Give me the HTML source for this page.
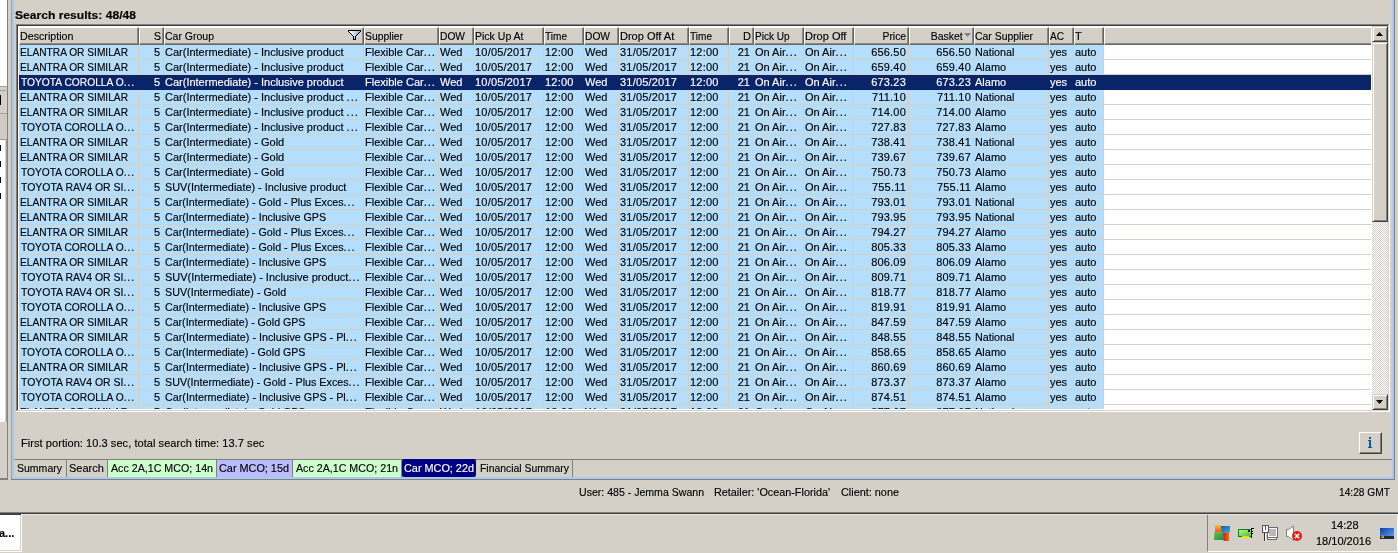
<!DOCTYPE html><html><head><meta charset="utf-8"><style>
*{margin:0;padding:0;box-sizing:border-box}
body{-webkit-text-stroke:.15px currentColor;will-change:transform;width:1398px;height:553px;overflow:hidden;background:#d4d0c8;font-family:"Liberation Sans", sans-serif;font-size:11px;color:#000;position:relative}
div{position:absolute}
i{font-style:normal;display:inline-block;white-space:pre}
svg{display:block}
.e{font-weight:normal;letter-spacing:1px}
.row{left:19px;width:1352px;height:15px}
.c{top:0;height:14px;line-height:14px;white-space:pre;overflow:hidden;padding-left:1px}
.n{letter-spacing:.2px}
.r{text-align:right;padding-left:0;padding-right:3px}
.r.n{padding-right:2px}
.hc{top:27px;height:18px;line-height:17px;white-space:pre;overflow:hidden;background:#d4d0c8;border-top:1px solid #fff;border-left:1px solid #fff;border-right:1px solid #66625c;border-bottom:1px solid #6c6862;box-shadow:inset -1px 0 0 #8c8882, inset 0 -1px 0 #8c8882;padding-left:0}
.hr{text-align:right;padding-left:0;padding-right:2px}
</style></head><body>
<div style='left:0;top:0;width:7px;height:86px;background:#fff'></div><div style='left:0;top:86px;width:7px;height:1px;background:#a0a0a0'></div><div style='left:0;top:90px;width:6px;height:1px;background:#a0a0a0'></div><div style='left:0;top:95px;width:1px;height:10px;background:#000'></div><div style='left:0;top:113px;width:7px;height:1px;background:#a0a0a0'></div><div style='left:0;top:114px;width:7px;height:25px;background:#cfcbc3'></div><div style='left:0;top:139px;width:7px;height:1px;background:#a0a0a0'></div><div style='left:0;top:140px;width:5px;height:282px;background:#fff'></div><div style='left:6px;top:140px;width:1px;height:282px;background:#a0a0a0'></div><div style='left:0;top:145px;width:1px;height:6px;background:#000'></div><div style='left:0;top:161px;width:1px;height:6px;background:#000'></div><div style='left:0;top:177px;width:1px;height:6px;background:#000'></div><div style='left:0;top:193px;width:1px;height:6px;background:#000'></div><div style='left:7px;top:0;width:1px;height:479px;background:#808080'></div><div style='left:0;top:478px;width:8px;height:2px;background:#808080'></div><div style='left:11px;top:0;width:1px;height:480px;background:#a0a0a0'></div><div style='left:12px;top:0;width:2px;height:479px;background:#a6caf0'></div><div style='left:1392px;top:0;width:2px;height:479px;background:#a6caf0'></div><div style='left:1394px;top:0;width:1px;height:480px;background:#808080'></div><div style='left:12px;top:477px;width:1382px;height:2px;background:#a6caf0'></div><div style='left:11px;top:479px;width:1384px;height:1px;background:#808080'></div><div style='left:15px;top:8px;height:14px;line-height:14px;font-weight:bold;white-space:pre'><i style='transform:scaleX(1.099);transform-origin:left'>Search results: 48/48</i></div><div style='left:16px;top:24px;width:1374px;height:388px;background:#fff;border-top:1px solid #808080;border-left:1px solid #808080'></div><div style='left:17px;top:25px;width:1372px;height:1px;background:#404040'></div><div style='left:17px;top:25px;width:1px;height:386px;background:#404040'></div><div class='hc' style='left:19px;width:120px'><i style='transform:scaleX(0.972);transform-origin:left'>Description</i></div><div class='hc hr' style='left:139px;width:25px'>S</div><div class='hc' style='left:164px;width:200px'><i style='transform:scaleX(0.954);transform-origin:left'>Car Group</i></div><div class='hc' style='left:364px;width:75px'><i style='transform:scaleX(0.942);transform-origin:left'>Supplier</i></div><div class='hc' style='left:439px;width:35px'><i style='transform:scaleX(0.930);transform-origin:left'>DOW</i></div><div class='hc' style='left:474px;width:70px'><i style='transform:scaleX(0.956);transform-origin:left'>Pick Up At</i></div><div class='hc' style='left:544px;width:40px'><i style='transform:scaleX(0.915);transform-origin:left'>Time</i></div><div class='hc' style='left:584px;width:35px'><i style='transform:scaleX(0.930);transform-origin:left'>DOW</i></div><div class='hc' style='left:619px;width:70px'>Drop Off At</div><div class='hc' style='left:689px;width:40px'><i style='transform:scaleX(0.915);transform-origin:left'>Time</i></div><div class='hc hr' style='left:729px;width:25px'>D</div><div class='hc' style='left:754px;width:50px'><i style='transform:scaleX(0.913);transform-origin:left'>Pick Up</i></div><div class='hc' style='left:804px;width:50px'>Drop Off</div><div class='hc hr' style='left:854px;width:55px'><i style='transform:scaleX(0.938);transform-origin:right'>Price</i></div><div class='hc hr' style='left:909px;width:65px;padding-right:10px'><i style='transform:scaleX(0.951);transform-origin:right'>Basket</i></div><div class='hc' style='left:974px;width:75px'><i style='transform:scaleX(0.949);transform-origin:left'>Car Supplier</i></div><div class='hc' style='left:1049px;width:25px'><i style='transform:scaleX(0.916);transform-origin:left'>AC</i></div><div class='hc' style='left:1074px;width:30px'>T</div><div class='hc' style='left:1104px;width:267px;border-right:0;box-shadow:inset 0 -1px 0 #8c8882'></div><div style='left:348px;top:30px;width:13px;height:10px'><svg width='13' height='10' viewBox='0 0 13 10' shape-rendering='crispEdges'><defs><linearGradient id='fg' x1='0' x2='1'><stop offset='0' stop-color='#ffffff'/><stop offset='1' stop-color='#90b4e0'/></linearGradient></defs><rect x='0' y='0' width='13' height='1' fill='#000'/><rect x='0' y='1' width='1' height='1' fill='#000'/><rect x='12' y='1' width='1' height='1' fill='#000'/><rect x='1' y='1' width='11' height='1' fill='url(#fg)'/><rect x='1' y='2' width='1' height='1' fill='#000'/><rect x='11' y='2' width='1' height='1' fill='#000'/><rect x='2' y='2' width='9' height='1' fill='url(#fg)'/><rect x='2' y='3' width='1' height='1' fill='#000'/><rect x='10' y='3' width='1' height='1' fill='#000'/><rect x='3' y='3' width='7' height='1' fill='url(#fg)'/><rect x='3' y='4' width='1' height='1' fill='#000'/><rect x='9' y='4' width='1' height='1' fill='#000'/><rect x='4' y='4' width='5' height='1' fill='url(#fg)'/><rect x='4' y='5' width='1' height='1' fill='#000'/><rect x='8' y='5' width='1' height='1' fill='#000'/><rect x='5' y='5' width='3' height='1' fill='url(#fg)'/><rect x='5' y='6' width='1' height='1' fill='#000'/><rect x='7' y='6' width='1' height='1' fill='#000'/><rect x='6' y='6' width='1' height='1' fill='#c8d8f0'/><rect x='5' y='7' width='1' height='1' fill='#000'/><rect x='7' y='7' width='1' height='1' fill='#000'/><rect x='6' y='7' width='1' height='1' fill='#c8d8f0'/><rect x='5' y='8' width='1' height='1' fill='#000'/><rect x='7' y='8' width='1' height='1' fill='#000'/><rect x='6' y='8' width='1' height='1' fill='#c8d8f0'/><rect x='5' y='9' width='3' height='1' fill='#000'/></svg></div><div style='left:964px;top:33px;width:7px;height:4px'><svg width='7' height='4' viewBox='0 0 7 4'><path d='M0 0H7L3.5 4Z' fill='#808080'/></svg></div><div style='left:19px;top:45px;width:1085px;height:14px;background:#b5defd;color:#000;overflow:hidden'><div class='c' style='left:0px;width:119px'><i style='transform:scaleX(0.925);transform-origin:left'>ELANTRA OR SIMILAR</i></div><div style='left:119px;top:0;width:1px;height:14px;background:#d4d0c8'></div><div class='c r' style='left:120px;width:24px'>5</div><div style='left:144px;top:0;width:1px;height:14px;background:#d4d0c8'></div><div class='c' style='left:145px;width:199px'>Car(Intermediate) - Inclusive product</div><div style='left:344px;top:0;width:1px;height:14px;background:#d4d0c8'></div><div class='c' style='left:345px;width:74px'>Flexible Car<b class=e>...</b></div><div style='left:419px;top:0;width:1px;height:14px;background:#d4d0c8'></div><div class='c' style='left:420px;width:34px'>Wed</div><div style='left:454px;top:0;width:1px;height:14px;background:#d4d0c8'></div><div class='c n' style='left:455px;width:69px'>10/05/2017</div><div style='left:524px;top:0;width:1px;height:14px;background:#d4d0c8'></div><div class='c n' style='left:525px;width:39px'>12:00</div><div style='left:564px;top:0;width:1px;height:14px;background:#d4d0c8'></div><div class='c' style='left:565px;width:34px'>Wed</div><div style='left:599px;top:0;width:1px;height:14px;background:#d4d0c8'></div><div class='c n' style='left:600px;width:69px'>31/05/2017</div><div style='left:669px;top:0;width:1px;height:14px;background:#d4d0c8'></div><div class='c n' style='left:670px;width:39px'>12:00</div><div style='left:709px;top:0;width:1px;height:14px;background:#d4d0c8'></div><div class='c r' style='left:710px;width:24px'>21</div><div style='left:734px;top:0;width:1px;height:14px;background:#d4d0c8'></div><div class='c' style='left:735px;width:49px'>On Air<b class=e>...</b></div><div style='left:784px;top:0;width:1px;height:14px;background:#d4d0c8'></div><div class='c' style='left:785px;width:49px'>On Air<b class=e>...</b></div><div style='left:834px;top:0;width:1px;height:14px;background:#d4d0c8'></div><div class='c r n' style='left:835px;width:54px'>656.50</div><div style='left:889px;top:0;width:1px;height:14px;background:#d4d0c8'></div><div class='c r n' style='left:890px;width:64px'>656.50</div><div style='left:954px;top:0;width:1px;height:14px;background:#d4d0c8'></div><div class='c' style='left:955px;width:74px'><i style='transform:scaleX(0.976);transform-origin:left'>National</i></div><div style='left:1029px;top:0;width:1px;height:14px;background:#d4d0c8'></div><div class='c' style='left:1030px;width:24px'>yes</div><div style='left:1054px;top:0;width:1px;height:14px;background:#d4d0c8'></div><div class='c' style='left:1055px;width:29px'>auto</div><div style='left:1084px;top:0;width:1px;height:14px;background:#d4d0c8'></div></div><div style='left:19px;top:59px;width:1352px;height:1px;background:#d4d0c8'></div><div style='left:19px;top:60px;width:1085px;height:14px;background:#b5defd;color:#000;overflow:hidden'><div class='c' style='left:0px;width:119px'><i style='transform:scaleX(0.925);transform-origin:left'>ELANTRA OR SIMILAR</i></div><div style='left:119px;top:0;width:1px;height:14px;background:#d4d0c8'></div><div class='c r' style='left:120px;width:24px'>5</div><div style='left:144px;top:0;width:1px;height:14px;background:#d4d0c8'></div><div class='c' style='left:145px;width:199px'>Car(Intermediate) - Inclusive product</div><div style='left:344px;top:0;width:1px;height:14px;background:#d4d0c8'></div><div class='c' style='left:345px;width:74px'>Flexible Car<b class=e>...</b></div><div style='left:419px;top:0;width:1px;height:14px;background:#d4d0c8'></div><div class='c' style='left:420px;width:34px'>Wed</div><div style='left:454px;top:0;width:1px;height:14px;background:#d4d0c8'></div><div class='c n' style='left:455px;width:69px'>10/05/2017</div><div style='left:524px;top:0;width:1px;height:14px;background:#d4d0c8'></div><div class='c n' style='left:525px;width:39px'>12:00</div><div style='left:564px;top:0;width:1px;height:14px;background:#d4d0c8'></div><div class='c' style='left:565px;width:34px'>Wed</div><div style='left:599px;top:0;width:1px;height:14px;background:#d4d0c8'></div><div class='c n' style='left:600px;width:69px'>31/05/2017</div><div style='left:669px;top:0;width:1px;height:14px;background:#d4d0c8'></div><div class='c n' style='left:670px;width:39px'>12:00</div><div style='left:709px;top:0;width:1px;height:14px;background:#d4d0c8'></div><div class='c r' style='left:710px;width:24px'>21</div><div style='left:734px;top:0;width:1px;height:14px;background:#d4d0c8'></div><div class='c' style='left:735px;width:49px'>On Air<b class=e>...</b></div><div style='left:784px;top:0;width:1px;height:14px;background:#d4d0c8'></div><div class='c' style='left:785px;width:49px'>On Air<b class=e>...</b></div><div style='left:834px;top:0;width:1px;height:14px;background:#d4d0c8'></div><div class='c r n' style='left:835px;width:54px'>659.40</div><div style='left:889px;top:0;width:1px;height:14px;background:#d4d0c8'></div><div class='c r n' style='left:890px;width:64px'>659.40</div><div style='left:954px;top:0;width:1px;height:14px;background:#d4d0c8'></div><div class='c' style='left:955px;width:74px'>Alamo</div><div style='left:1029px;top:0;width:1px;height:14px;background:#d4d0c8'></div><div class='c' style='left:1030px;width:24px'>yes</div><div style='left:1054px;top:0;width:1px;height:14px;background:#d4d0c8'></div><div class='c' style='left:1055px;width:29px'>auto</div><div style='left:1084px;top:0;width:1px;height:14px;background:#d4d0c8'></div></div><div style='left:19px;top:74px;width:1352px;height:1px;background:#d4d0c8'></div><div style='left:19px;top:75px;width:1352px;height:15px;background:#0a246a;color:#fff;overflow:hidden'><div class='c' style='left:0px;width:119px'><i style='transform:scaleX(0.931);transform-origin:left;margin-left:1px'>TOYOTA COROLLA O<b class=e>...</b></i></div><div class='c r' style='left:120px;width:24px'>5</div><div class='c' style='left:145px;width:199px'>Car(Intermediate) - Inclusive product</div><div class='c' style='left:345px;width:74px'>Flexible Car<b class=e>...</b></div><div class='c' style='left:420px;width:34px'>Wed</div><div class='c n' style='left:455px;width:69px'>10/05/2017</div><div class='c n' style='left:525px;width:39px'>12:00</div><div class='c' style='left:565px;width:34px'>Wed</div><div class='c n' style='left:600px;width:69px'>31/05/2017</div><div class='c n' style='left:670px;width:39px'>12:00</div><div class='c r' style='left:710px;width:24px'>21</div><div class='c' style='left:735px;width:49px'>On Air<b class=e>...</b></div><div class='c' style='left:785px;width:49px'>On Air<b class=e>...</b></div><div class='c r n' style='left:835px;width:54px'>673.23</div><div class='c r n' style='left:890px;width:64px'>673.23</div><div class='c' style='left:955px;width:74px'>Alamo</div><div class='c' style='left:1030px;width:24px'>yes</div><div class='c' style='left:1055px;width:29px'>auto</div></div><div style='left:19px;top:89px;width:1352px;height:1px;background:#0a246a'></div><div style='left:19px;top:90px;width:1085px;height:14px;background:#b5defd;color:#000;overflow:hidden'><div class='c' style='left:0px;width:119px'><i style='transform:scaleX(0.925);transform-origin:left'>ELANTRA OR SIMILAR</i></div><div style='left:119px;top:0;width:1px;height:14px;background:#d4d0c8'></div><div class='c r' style='left:120px;width:24px'>5</div><div style='left:144px;top:0;width:1px;height:14px;background:#d4d0c8'></div><div class='c' style='left:145px;width:199px'>Car(Intermediate) - Inclusive product <b class=e>...</b></div><div style='left:344px;top:0;width:1px;height:14px;background:#d4d0c8'></div><div class='c' style='left:345px;width:74px'>Flexible Car<b class=e>...</b></div><div style='left:419px;top:0;width:1px;height:14px;background:#d4d0c8'></div><div class='c' style='left:420px;width:34px'>Wed</div><div style='left:454px;top:0;width:1px;height:14px;background:#d4d0c8'></div><div class='c n' style='left:455px;width:69px'>10/05/2017</div><div style='left:524px;top:0;width:1px;height:14px;background:#d4d0c8'></div><div class='c n' style='left:525px;width:39px'>12:00</div><div style='left:564px;top:0;width:1px;height:14px;background:#d4d0c8'></div><div class='c' style='left:565px;width:34px'>Wed</div><div style='left:599px;top:0;width:1px;height:14px;background:#d4d0c8'></div><div class='c n' style='left:600px;width:69px'>31/05/2017</div><div style='left:669px;top:0;width:1px;height:14px;background:#d4d0c8'></div><div class='c n' style='left:670px;width:39px'>12:00</div><div style='left:709px;top:0;width:1px;height:14px;background:#d4d0c8'></div><div class='c r' style='left:710px;width:24px'>21</div><div style='left:734px;top:0;width:1px;height:14px;background:#d4d0c8'></div><div class='c' style='left:735px;width:49px'>On Air<b class=e>...</b></div><div style='left:784px;top:0;width:1px;height:14px;background:#d4d0c8'></div><div class='c' style='left:785px;width:49px'>On Air<b class=e>...</b></div><div style='left:834px;top:0;width:1px;height:14px;background:#d4d0c8'></div><div class='c r n' style='left:835px;width:54px'>711.10</div><div style='left:889px;top:0;width:1px;height:14px;background:#d4d0c8'></div><div class='c r n' style='left:890px;width:64px'>711.10</div><div style='left:954px;top:0;width:1px;height:14px;background:#d4d0c8'></div><div class='c' style='left:955px;width:74px'><i style='transform:scaleX(0.976);transform-origin:left'>National</i></div><div style='left:1029px;top:0;width:1px;height:14px;background:#d4d0c8'></div><div class='c' style='left:1030px;width:24px'>yes</div><div style='left:1054px;top:0;width:1px;height:14px;background:#d4d0c8'></div><div class='c' style='left:1055px;width:29px'>auto</div><div style='left:1084px;top:0;width:1px;height:14px;background:#d4d0c8'></div></div><div style='left:19px;top:104px;width:1352px;height:1px;background:#d4d0c8'></div><div style='left:19px;top:105px;width:1085px;height:14px;background:#b5defd;color:#000;overflow:hidden'><div class='c' style='left:0px;width:119px'><i style='transform:scaleX(0.925);transform-origin:left'>ELANTRA OR SIMILAR</i></div><div style='left:119px;top:0;width:1px;height:14px;background:#d4d0c8'></div><div class='c r' style='left:120px;width:24px'>5</div><div style='left:144px;top:0;width:1px;height:14px;background:#d4d0c8'></div><div class='c' style='left:145px;width:199px'>Car(Intermediate) - Inclusive product <b class=e>...</b></div><div style='left:344px;top:0;width:1px;height:14px;background:#d4d0c8'></div><div class='c' style='left:345px;width:74px'>Flexible Car<b class=e>...</b></div><div style='left:419px;top:0;width:1px;height:14px;background:#d4d0c8'></div><div class='c' style='left:420px;width:34px'>Wed</div><div style='left:454px;top:0;width:1px;height:14px;background:#d4d0c8'></div><div class='c n' style='left:455px;width:69px'>10/05/2017</div><div style='left:524px;top:0;width:1px;height:14px;background:#d4d0c8'></div><div class='c n' style='left:525px;width:39px'>12:00</div><div style='left:564px;top:0;width:1px;height:14px;background:#d4d0c8'></div><div class='c' style='left:565px;width:34px'>Wed</div><div style='left:599px;top:0;width:1px;height:14px;background:#d4d0c8'></div><div class='c n' style='left:600px;width:69px'>31/05/2017</div><div style='left:669px;top:0;width:1px;height:14px;background:#d4d0c8'></div><div class='c n' style='left:670px;width:39px'>12:00</div><div style='left:709px;top:0;width:1px;height:14px;background:#d4d0c8'></div><div class='c r' style='left:710px;width:24px'>21</div><div style='left:734px;top:0;width:1px;height:14px;background:#d4d0c8'></div><div class='c' style='left:735px;width:49px'>On Air<b class=e>...</b></div><div style='left:784px;top:0;width:1px;height:14px;background:#d4d0c8'></div><div class='c' style='left:785px;width:49px'>On Air<b class=e>...</b></div><div style='left:834px;top:0;width:1px;height:14px;background:#d4d0c8'></div><div class='c r n' style='left:835px;width:54px'>714.00</div><div style='left:889px;top:0;width:1px;height:14px;background:#d4d0c8'></div><div class='c r n' style='left:890px;width:64px'>714.00</div><div style='left:954px;top:0;width:1px;height:14px;background:#d4d0c8'></div><div class='c' style='left:955px;width:74px'>Alamo</div><div style='left:1029px;top:0;width:1px;height:14px;background:#d4d0c8'></div><div class='c' style='left:1030px;width:24px'>yes</div><div style='left:1054px;top:0;width:1px;height:14px;background:#d4d0c8'></div><div class='c' style='left:1055px;width:29px'>auto</div><div style='left:1084px;top:0;width:1px;height:14px;background:#d4d0c8'></div></div><div style='left:19px;top:119px;width:1352px;height:1px;background:#d4d0c8'></div><div style='left:19px;top:120px;width:1085px;height:14px;background:#b5defd;color:#000;overflow:hidden'><div class='c' style='left:0px;width:119px'><i style='transform:scaleX(0.931);transform-origin:left;margin-left:1px'>TOYOTA COROLLA O<b class=e>...</b></i></div><div style='left:119px;top:0;width:1px;height:14px;background:#d4d0c8'></div><div class='c r' style='left:120px;width:24px'>5</div><div style='left:144px;top:0;width:1px;height:14px;background:#d4d0c8'></div><div class='c' style='left:145px;width:199px'>Car(Intermediate) - Inclusive product <b class=e>...</b></div><div style='left:344px;top:0;width:1px;height:14px;background:#d4d0c8'></div><div class='c' style='left:345px;width:74px'>Flexible Car<b class=e>...</b></div><div style='left:419px;top:0;width:1px;height:14px;background:#d4d0c8'></div><div class='c' style='left:420px;width:34px'>Wed</div><div style='left:454px;top:0;width:1px;height:14px;background:#d4d0c8'></div><div class='c n' style='left:455px;width:69px'>10/05/2017</div><div style='left:524px;top:0;width:1px;height:14px;background:#d4d0c8'></div><div class='c n' style='left:525px;width:39px'>12:00</div><div style='left:564px;top:0;width:1px;height:14px;background:#d4d0c8'></div><div class='c' style='left:565px;width:34px'>Wed</div><div style='left:599px;top:0;width:1px;height:14px;background:#d4d0c8'></div><div class='c n' style='left:600px;width:69px'>31/05/2017</div><div style='left:669px;top:0;width:1px;height:14px;background:#d4d0c8'></div><div class='c n' style='left:670px;width:39px'>12:00</div><div style='left:709px;top:0;width:1px;height:14px;background:#d4d0c8'></div><div class='c r' style='left:710px;width:24px'>21</div><div style='left:734px;top:0;width:1px;height:14px;background:#d4d0c8'></div><div class='c' style='left:735px;width:49px'>On Air<b class=e>...</b></div><div style='left:784px;top:0;width:1px;height:14px;background:#d4d0c8'></div><div class='c' style='left:785px;width:49px'>On Air<b class=e>...</b></div><div style='left:834px;top:0;width:1px;height:14px;background:#d4d0c8'></div><div class='c r n' style='left:835px;width:54px'>727.83</div><div style='left:889px;top:0;width:1px;height:14px;background:#d4d0c8'></div><div class='c r n' style='left:890px;width:64px'>727.83</div><div style='left:954px;top:0;width:1px;height:14px;background:#d4d0c8'></div><div class='c' style='left:955px;width:74px'>Alamo</div><div style='left:1029px;top:0;width:1px;height:14px;background:#d4d0c8'></div><div class='c' style='left:1030px;width:24px'>yes</div><div style='left:1054px;top:0;width:1px;height:14px;background:#d4d0c8'></div><div class='c' style='left:1055px;width:29px'>auto</div><div style='left:1084px;top:0;width:1px;height:14px;background:#d4d0c8'></div></div><div style='left:19px;top:134px;width:1352px;height:1px;background:#d4d0c8'></div><div style='left:19px;top:135px;width:1085px;height:14px;background:#b5defd;color:#000;overflow:hidden'><div class='c' style='left:0px;width:119px'><i style='transform:scaleX(0.925);transform-origin:left'>ELANTRA OR SIMILAR</i></div><div style='left:119px;top:0;width:1px;height:14px;background:#d4d0c8'></div><div class='c r' style='left:120px;width:24px'>5</div><div style='left:144px;top:0;width:1px;height:14px;background:#d4d0c8'></div><div class='c' style='left:145px;width:199px'>Car(Intermediate) - Gold</div><div style='left:344px;top:0;width:1px;height:14px;background:#d4d0c8'></div><div class='c' style='left:345px;width:74px'>Flexible Car<b class=e>...</b></div><div style='left:419px;top:0;width:1px;height:14px;background:#d4d0c8'></div><div class='c' style='left:420px;width:34px'>Wed</div><div style='left:454px;top:0;width:1px;height:14px;background:#d4d0c8'></div><div class='c n' style='left:455px;width:69px'>10/05/2017</div><div style='left:524px;top:0;width:1px;height:14px;background:#d4d0c8'></div><div class='c n' style='left:525px;width:39px'>12:00</div><div style='left:564px;top:0;width:1px;height:14px;background:#d4d0c8'></div><div class='c' style='left:565px;width:34px'>Wed</div><div style='left:599px;top:0;width:1px;height:14px;background:#d4d0c8'></div><div class='c n' style='left:600px;width:69px'>31/05/2017</div><div style='left:669px;top:0;width:1px;height:14px;background:#d4d0c8'></div><div class='c n' style='left:670px;width:39px'>12:00</div><div style='left:709px;top:0;width:1px;height:14px;background:#d4d0c8'></div><div class='c r' style='left:710px;width:24px'>21</div><div style='left:734px;top:0;width:1px;height:14px;background:#d4d0c8'></div><div class='c' style='left:735px;width:49px'>On Air<b class=e>...</b></div><div style='left:784px;top:0;width:1px;height:14px;background:#d4d0c8'></div><div class='c' style='left:785px;width:49px'>On Air<b class=e>...</b></div><div style='left:834px;top:0;width:1px;height:14px;background:#d4d0c8'></div><div class='c r n' style='left:835px;width:54px'>738.41</div><div style='left:889px;top:0;width:1px;height:14px;background:#d4d0c8'></div><div class='c r n' style='left:890px;width:64px'>738.41</div><div style='left:954px;top:0;width:1px;height:14px;background:#d4d0c8'></div><div class='c' style='left:955px;width:74px'><i style='transform:scaleX(0.976);transform-origin:left'>National</i></div><div style='left:1029px;top:0;width:1px;height:14px;background:#d4d0c8'></div><div class='c' style='left:1030px;width:24px'>yes</div><div style='left:1054px;top:0;width:1px;height:14px;background:#d4d0c8'></div><div class='c' style='left:1055px;width:29px'>auto</div><div style='left:1084px;top:0;width:1px;height:14px;background:#d4d0c8'></div></div><div style='left:19px;top:149px;width:1352px;height:1px;background:#d4d0c8'></div><div style='left:19px;top:150px;width:1085px;height:14px;background:#b5defd;color:#000;overflow:hidden'><div class='c' style='left:0px;width:119px'><i style='transform:scaleX(0.925);transform-origin:left'>ELANTRA OR SIMILAR</i></div><div style='left:119px;top:0;width:1px;height:14px;background:#d4d0c8'></div><div class='c r' style='left:120px;width:24px'>5</div><div style='left:144px;top:0;width:1px;height:14px;background:#d4d0c8'></div><div class='c' style='left:145px;width:199px'>Car(Intermediate) - Gold</div><div style='left:344px;top:0;width:1px;height:14px;background:#d4d0c8'></div><div class='c' style='left:345px;width:74px'>Flexible Car<b class=e>...</b></div><div style='left:419px;top:0;width:1px;height:14px;background:#d4d0c8'></div><div class='c' style='left:420px;width:34px'>Wed</div><div style='left:454px;top:0;width:1px;height:14px;background:#d4d0c8'></div><div class='c n' style='left:455px;width:69px'>10/05/2017</div><div style='left:524px;top:0;width:1px;height:14px;background:#d4d0c8'></div><div class='c n' style='left:525px;width:39px'>12:00</div><div style='left:564px;top:0;width:1px;height:14px;background:#d4d0c8'></div><div class='c' style='left:565px;width:34px'>Wed</div><div style='left:599px;top:0;width:1px;height:14px;background:#d4d0c8'></div><div class='c n' style='left:600px;width:69px'>31/05/2017</div><div style='left:669px;top:0;width:1px;height:14px;background:#d4d0c8'></div><div class='c n' style='left:670px;width:39px'>12:00</div><div style='left:709px;top:0;width:1px;height:14px;background:#d4d0c8'></div><div class='c r' style='left:710px;width:24px'>21</div><div style='left:734px;top:0;width:1px;height:14px;background:#d4d0c8'></div><div class='c' style='left:735px;width:49px'>On Air<b class=e>...</b></div><div style='left:784px;top:0;width:1px;height:14px;background:#d4d0c8'></div><div class='c' style='left:785px;width:49px'>On Air<b class=e>...</b></div><div style='left:834px;top:0;width:1px;height:14px;background:#d4d0c8'></div><div class='c r n' style='left:835px;width:54px'>739.67</div><div style='left:889px;top:0;width:1px;height:14px;background:#d4d0c8'></div><div class='c r n' style='left:890px;width:64px'>739.67</div><div style='left:954px;top:0;width:1px;height:14px;background:#d4d0c8'></div><div class='c' style='left:955px;width:74px'>Alamo</div><div style='left:1029px;top:0;width:1px;height:14px;background:#d4d0c8'></div><div class='c' style='left:1030px;width:24px'>yes</div><div style='left:1054px;top:0;width:1px;height:14px;background:#d4d0c8'></div><div class='c' style='left:1055px;width:29px'>auto</div><div style='left:1084px;top:0;width:1px;height:14px;background:#d4d0c8'></div></div><div style='left:19px;top:164px;width:1352px;height:1px;background:#d4d0c8'></div><div style='left:19px;top:165px;width:1085px;height:14px;background:#b5defd;color:#000;overflow:hidden'><div class='c' style='left:0px;width:119px'><i style='transform:scaleX(0.931);transform-origin:left;margin-left:1px'>TOYOTA COROLLA O<b class=e>...</b></i></div><div style='left:119px;top:0;width:1px;height:14px;background:#d4d0c8'></div><div class='c r' style='left:120px;width:24px'>5</div><div style='left:144px;top:0;width:1px;height:14px;background:#d4d0c8'></div><div class='c' style='left:145px;width:199px'>Car(Intermediate) - Gold</div><div style='left:344px;top:0;width:1px;height:14px;background:#d4d0c8'></div><div class='c' style='left:345px;width:74px'>Flexible Car<b class=e>...</b></div><div style='left:419px;top:0;width:1px;height:14px;background:#d4d0c8'></div><div class='c' style='left:420px;width:34px'>Wed</div><div style='left:454px;top:0;width:1px;height:14px;background:#d4d0c8'></div><div class='c n' style='left:455px;width:69px'>10/05/2017</div><div style='left:524px;top:0;width:1px;height:14px;background:#d4d0c8'></div><div class='c n' style='left:525px;width:39px'>12:00</div><div style='left:564px;top:0;width:1px;height:14px;background:#d4d0c8'></div><div class='c' style='left:565px;width:34px'>Wed</div><div style='left:599px;top:0;width:1px;height:14px;background:#d4d0c8'></div><div class='c n' style='left:600px;width:69px'>31/05/2017</div><div style='left:669px;top:0;width:1px;height:14px;background:#d4d0c8'></div><div class='c n' style='left:670px;width:39px'>12:00</div><div style='left:709px;top:0;width:1px;height:14px;background:#d4d0c8'></div><div class='c r' style='left:710px;width:24px'>21</div><div style='left:734px;top:0;width:1px;height:14px;background:#d4d0c8'></div><div class='c' style='left:735px;width:49px'>On Air<b class=e>...</b></div><div style='left:784px;top:0;width:1px;height:14px;background:#d4d0c8'></div><div class='c' style='left:785px;width:49px'>On Air<b class=e>...</b></div><div style='left:834px;top:0;width:1px;height:14px;background:#d4d0c8'></div><div class='c r n' style='left:835px;width:54px'>750.73</div><div style='left:889px;top:0;width:1px;height:14px;background:#d4d0c8'></div><div class='c r n' style='left:890px;width:64px'>750.73</div><div style='left:954px;top:0;width:1px;height:14px;background:#d4d0c8'></div><div class='c' style='left:955px;width:74px'>Alamo</div><div style='left:1029px;top:0;width:1px;height:14px;background:#d4d0c8'></div><div class='c' style='left:1030px;width:24px'>yes</div><div style='left:1054px;top:0;width:1px;height:14px;background:#d4d0c8'></div><div class='c' style='left:1055px;width:29px'>auto</div><div style='left:1084px;top:0;width:1px;height:14px;background:#d4d0c8'></div></div><div style='left:19px;top:179px;width:1352px;height:1px;background:#d4d0c8'></div><div style='left:19px;top:180px;width:1085px;height:14px;background:#b5defd;color:#000;overflow:hidden'><div class='c' style='left:0px;width:119px'><i style='transform:scaleX(0.952);transform-origin:left;margin-left:1px'>TOYOTA RAV4 OR SI<b class=e>...</b></i></div><div style='left:119px;top:0;width:1px;height:14px;background:#d4d0c8'></div><div class='c r' style='left:120px;width:24px'>5</div><div style='left:144px;top:0;width:1px;height:14px;background:#d4d0c8'></div><div class='c' style='left:145px;width:199px'><i style='transform:scaleX(0.989);transform-origin:left'>SUV(Intermediate) - Inclusive product</i></div><div style='left:344px;top:0;width:1px;height:14px;background:#d4d0c8'></div><div class='c' style='left:345px;width:74px'>Flexible Car<b class=e>...</b></div><div style='left:419px;top:0;width:1px;height:14px;background:#d4d0c8'></div><div class='c' style='left:420px;width:34px'>Wed</div><div style='left:454px;top:0;width:1px;height:14px;background:#d4d0c8'></div><div class='c n' style='left:455px;width:69px'>10/05/2017</div><div style='left:524px;top:0;width:1px;height:14px;background:#d4d0c8'></div><div class='c n' style='left:525px;width:39px'>12:00</div><div style='left:564px;top:0;width:1px;height:14px;background:#d4d0c8'></div><div class='c' style='left:565px;width:34px'>Wed</div><div style='left:599px;top:0;width:1px;height:14px;background:#d4d0c8'></div><div class='c n' style='left:600px;width:69px'>31/05/2017</div><div style='left:669px;top:0;width:1px;height:14px;background:#d4d0c8'></div><div class='c n' style='left:670px;width:39px'>12:00</div><div style='left:709px;top:0;width:1px;height:14px;background:#d4d0c8'></div><div class='c r' style='left:710px;width:24px'>21</div><div style='left:734px;top:0;width:1px;height:14px;background:#d4d0c8'></div><div class='c' style='left:735px;width:49px'>On Air<b class=e>...</b></div><div style='left:784px;top:0;width:1px;height:14px;background:#d4d0c8'></div><div class='c' style='left:785px;width:49px'>On Air<b class=e>...</b></div><div style='left:834px;top:0;width:1px;height:14px;background:#d4d0c8'></div><div class='c r n' style='left:835px;width:54px'>755.11</div><div style='left:889px;top:0;width:1px;height:14px;background:#d4d0c8'></div><div class='c r n' style='left:890px;width:64px'>755.11</div><div style='left:954px;top:0;width:1px;height:14px;background:#d4d0c8'></div><div class='c' style='left:955px;width:74px'>Alamo</div><div style='left:1029px;top:0;width:1px;height:14px;background:#d4d0c8'></div><div class='c' style='left:1030px;width:24px'>yes</div><div style='left:1054px;top:0;width:1px;height:14px;background:#d4d0c8'></div><div class='c' style='left:1055px;width:29px'>auto</div><div style='left:1084px;top:0;width:1px;height:14px;background:#d4d0c8'></div></div><div style='left:19px;top:194px;width:1352px;height:1px;background:#d4d0c8'></div><div style='left:19px;top:195px;width:1085px;height:14px;background:#b5defd;color:#000;overflow:hidden'><div class='c' style='left:0px;width:119px'><i style='transform:scaleX(0.925);transform-origin:left'>ELANTRA OR SIMILAR</i></div><div style='left:119px;top:0;width:1px;height:14px;background:#d4d0c8'></div><div class='c r' style='left:120px;width:24px'>5</div><div style='left:144px;top:0;width:1px;height:14px;background:#d4d0c8'></div><div class='c' style='left:145px;width:199px'><i style='transform:scaleX(0.974);transform-origin:left'>Car(Intermediate) - Gold - Plus Exces<b class=e>...</b></i></div><div style='left:344px;top:0;width:1px;height:14px;background:#d4d0c8'></div><div class='c' style='left:345px;width:74px'>Flexible Car<b class=e>...</b></div><div style='left:419px;top:0;width:1px;height:14px;background:#d4d0c8'></div><div class='c' style='left:420px;width:34px'>Wed</div><div style='left:454px;top:0;width:1px;height:14px;background:#d4d0c8'></div><div class='c n' style='left:455px;width:69px'>10/05/2017</div><div style='left:524px;top:0;width:1px;height:14px;background:#d4d0c8'></div><div class='c n' style='left:525px;width:39px'>12:00</div><div style='left:564px;top:0;width:1px;height:14px;background:#d4d0c8'></div><div class='c' style='left:565px;width:34px'>Wed</div><div style='left:599px;top:0;width:1px;height:14px;background:#d4d0c8'></div><div class='c n' style='left:600px;width:69px'>31/05/2017</div><div style='left:669px;top:0;width:1px;height:14px;background:#d4d0c8'></div><div class='c n' style='left:670px;width:39px'>12:00</div><div style='left:709px;top:0;width:1px;height:14px;background:#d4d0c8'></div><div class='c r' style='left:710px;width:24px'>21</div><div style='left:734px;top:0;width:1px;height:14px;background:#d4d0c8'></div><div class='c' style='left:735px;width:49px'>On Air<b class=e>...</b></div><div style='left:784px;top:0;width:1px;height:14px;background:#d4d0c8'></div><div class='c' style='left:785px;width:49px'>On Air<b class=e>...</b></div><div style='left:834px;top:0;width:1px;height:14px;background:#d4d0c8'></div><div class='c r n' style='left:835px;width:54px'>793.01</div><div style='left:889px;top:0;width:1px;height:14px;background:#d4d0c8'></div><div class='c r n' style='left:890px;width:64px'>793.01</div><div style='left:954px;top:0;width:1px;height:14px;background:#d4d0c8'></div><div class='c' style='left:955px;width:74px'><i style='transform:scaleX(0.976);transform-origin:left'>National</i></div><div style='left:1029px;top:0;width:1px;height:14px;background:#d4d0c8'></div><div class='c' style='left:1030px;width:24px'>yes</div><div style='left:1054px;top:0;width:1px;height:14px;background:#d4d0c8'></div><div class='c' style='left:1055px;width:29px'>auto</div><div style='left:1084px;top:0;width:1px;height:14px;background:#d4d0c8'></div></div><div style='left:19px;top:209px;width:1352px;height:1px;background:#d4d0c8'></div><div style='left:19px;top:210px;width:1085px;height:14px;background:#b5defd;color:#000;overflow:hidden'><div class='c' style='left:0px;width:119px'><i style='transform:scaleX(0.925);transform-origin:left'>ELANTRA OR SIMILAR</i></div><div style='left:119px;top:0;width:1px;height:14px;background:#d4d0c8'></div><div class='c r' style='left:120px;width:24px'>5</div><div style='left:144px;top:0;width:1px;height:14px;background:#d4d0c8'></div><div class='c' style='left:145px;width:199px'><i style='transform:scaleX(0.976);transform-origin:left'>Car(Intermediate) - Inclusive GPS</i></div><div style='left:344px;top:0;width:1px;height:14px;background:#d4d0c8'></div><div class='c' style='left:345px;width:74px'>Flexible Car<b class=e>...</b></div><div style='left:419px;top:0;width:1px;height:14px;background:#d4d0c8'></div><div class='c' style='left:420px;width:34px'>Wed</div><div style='left:454px;top:0;width:1px;height:14px;background:#d4d0c8'></div><div class='c n' style='left:455px;width:69px'>10/05/2017</div><div style='left:524px;top:0;width:1px;height:14px;background:#d4d0c8'></div><div class='c n' style='left:525px;width:39px'>12:00</div><div style='left:564px;top:0;width:1px;height:14px;background:#d4d0c8'></div><div class='c' style='left:565px;width:34px'>Wed</div><div style='left:599px;top:0;width:1px;height:14px;background:#d4d0c8'></div><div class='c n' style='left:600px;width:69px'>31/05/2017</div><div style='left:669px;top:0;width:1px;height:14px;background:#d4d0c8'></div><div class='c n' style='left:670px;width:39px'>12:00</div><div style='left:709px;top:0;width:1px;height:14px;background:#d4d0c8'></div><div class='c r' style='left:710px;width:24px'>21</div><div style='left:734px;top:0;width:1px;height:14px;background:#d4d0c8'></div><div class='c' style='left:735px;width:49px'>On Air<b class=e>...</b></div><div style='left:784px;top:0;width:1px;height:14px;background:#d4d0c8'></div><div class='c' style='left:785px;width:49px'>On Air<b class=e>...</b></div><div style='left:834px;top:0;width:1px;height:14px;background:#d4d0c8'></div><div class='c r n' style='left:835px;width:54px'>793.95</div><div style='left:889px;top:0;width:1px;height:14px;background:#d4d0c8'></div><div class='c r n' style='left:890px;width:64px'>793.95</div><div style='left:954px;top:0;width:1px;height:14px;background:#d4d0c8'></div><div class='c' style='left:955px;width:74px'><i style='transform:scaleX(0.976);transform-origin:left'>National</i></div><div style='left:1029px;top:0;width:1px;height:14px;background:#d4d0c8'></div><div class='c' style='left:1030px;width:24px'>yes</div><div style='left:1054px;top:0;width:1px;height:14px;background:#d4d0c8'></div><div class='c' style='left:1055px;width:29px'>auto</div><div style='left:1084px;top:0;width:1px;height:14px;background:#d4d0c8'></div></div><div style='left:19px;top:224px;width:1352px;height:1px;background:#d4d0c8'></div><div style='left:19px;top:225px;width:1085px;height:14px;background:#b5defd;color:#000;overflow:hidden'><div class='c' style='left:0px;width:119px'><i style='transform:scaleX(0.925);transform-origin:left'>ELANTRA OR SIMILAR</i></div><div style='left:119px;top:0;width:1px;height:14px;background:#d4d0c8'></div><div class='c r' style='left:120px;width:24px'>5</div><div style='left:144px;top:0;width:1px;height:14px;background:#d4d0c8'></div><div class='c' style='left:145px;width:199px'><i style='transform:scaleX(0.974);transform-origin:left'>Car(Intermediate) - Gold - Plus Exces<b class=e>...</b></i></div><div style='left:344px;top:0;width:1px;height:14px;background:#d4d0c8'></div><div class='c' style='left:345px;width:74px'>Flexible Car<b class=e>...</b></div><div style='left:419px;top:0;width:1px;height:14px;background:#d4d0c8'></div><div class='c' style='left:420px;width:34px'>Wed</div><div style='left:454px;top:0;width:1px;height:14px;background:#d4d0c8'></div><div class='c n' style='left:455px;width:69px'>10/05/2017</div><div style='left:524px;top:0;width:1px;height:14px;background:#d4d0c8'></div><div class='c n' style='left:525px;width:39px'>12:00</div><div style='left:564px;top:0;width:1px;height:14px;background:#d4d0c8'></div><div class='c' style='left:565px;width:34px'>Wed</div><div style='left:599px;top:0;width:1px;height:14px;background:#d4d0c8'></div><div class='c n' style='left:600px;width:69px'>31/05/2017</div><div style='left:669px;top:0;width:1px;height:14px;background:#d4d0c8'></div><div class='c n' style='left:670px;width:39px'>12:00</div><div style='left:709px;top:0;width:1px;height:14px;background:#d4d0c8'></div><div class='c r' style='left:710px;width:24px'>21</div><div style='left:734px;top:0;width:1px;height:14px;background:#d4d0c8'></div><div class='c' style='left:735px;width:49px'>On Air<b class=e>...</b></div><div style='left:784px;top:0;width:1px;height:14px;background:#d4d0c8'></div><div class='c' style='left:785px;width:49px'>On Air<b class=e>...</b></div><div style='left:834px;top:0;width:1px;height:14px;background:#d4d0c8'></div><div class='c r n' style='left:835px;width:54px'>794.27</div><div style='left:889px;top:0;width:1px;height:14px;background:#d4d0c8'></div><div class='c r n' style='left:890px;width:64px'>794.27</div><div style='left:954px;top:0;width:1px;height:14px;background:#d4d0c8'></div><div class='c' style='left:955px;width:74px'>Alamo</div><div style='left:1029px;top:0;width:1px;height:14px;background:#d4d0c8'></div><div class='c' style='left:1030px;width:24px'>yes</div><div style='left:1054px;top:0;width:1px;height:14px;background:#d4d0c8'></div><div class='c' style='left:1055px;width:29px'>auto</div><div style='left:1084px;top:0;width:1px;height:14px;background:#d4d0c8'></div></div><div style='left:19px;top:239px;width:1352px;height:1px;background:#d4d0c8'></div><div style='left:19px;top:240px;width:1085px;height:14px;background:#b5defd;color:#000;overflow:hidden'><div class='c' style='left:0px;width:119px'><i style='transform:scaleX(0.931);transform-origin:left;margin-left:1px'>TOYOTA COROLLA O<b class=e>...</b></i></div><div style='left:119px;top:0;width:1px;height:14px;background:#d4d0c8'></div><div class='c r' style='left:120px;width:24px'>5</div><div style='left:144px;top:0;width:1px;height:14px;background:#d4d0c8'></div><div class='c' style='left:145px;width:199px'><i style='transform:scaleX(0.974);transform-origin:left'>Car(Intermediate) - Gold - Plus Exces<b class=e>...</b></i></div><div style='left:344px;top:0;width:1px;height:14px;background:#d4d0c8'></div><div class='c' style='left:345px;width:74px'>Flexible Car<b class=e>...</b></div><div style='left:419px;top:0;width:1px;height:14px;background:#d4d0c8'></div><div class='c' style='left:420px;width:34px'>Wed</div><div style='left:454px;top:0;width:1px;height:14px;background:#d4d0c8'></div><div class='c n' style='left:455px;width:69px'>10/05/2017</div><div style='left:524px;top:0;width:1px;height:14px;background:#d4d0c8'></div><div class='c n' style='left:525px;width:39px'>12:00</div><div style='left:564px;top:0;width:1px;height:14px;background:#d4d0c8'></div><div class='c' style='left:565px;width:34px'>Wed</div><div style='left:599px;top:0;width:1px;height:14px;background:#d4d0c8'></div><div class='c n' style='left:600px;width:69px'>31/05/2017</div><div style='left:669px;top:0;width:1px;height:14px;background:#d4d0c8'></div><div class='c n' style='left:670px;width:39px'>12:00</div><div style='left:709px;top:0;width:1px;height:14px;background:#d4d0c8'></div><div class='c r' style='left:710px;width:24px'>21</div><div style='left:734px;top:0;width:1px;height:14px;background:#d4d0c8'></div><div class='c' style='left:735px;width:49px'>On Air<b class=e>...</b></div><div style='left:784px;top:0;width:1px;height:14px;background:#d4d0c8'></div><div class='c' style='left:785px;width:49px'>On Air<b class=e>...</b></div><div style='left:834px;top:0;width:1px;height:14px;background:#d4d0c8'></div><div class='c r n' style='left:835px;width:54px'>805.33</div><div style='left:889px;top:0;width:1px;height:14px;background:#d4d0c8'></div><div class='c r n' style='left:890px;width:64px'>805.33</div><div style='left:954px;top:0;width:1px;height:14px;background:#d4d0c8'></div><div class='c' style='left:955px;width:74px'>Alamo</div><div style='left:1029px;top:0;width:1px;height:14px;background:#d4d0c8'></div><div class='c' style='left:1030px;width:24px'>yes</div><div style='left:1054px;top:0;width:1px;height:14px;background:#d4d0c8'></div><div class='c' style='left:1055px;width:29px'>auto</div><div style='left:1084px;top:0;width:1px;height:14px;background:#d4d0c8'></div></div><div style='left:19px;top:254px;width:1352px;height:1px;background:#d4d0c8'></div><div style='left:19px;top:255px;width:1085px;height:14px;background:#b5defd;color:#000;overflow:hidden'><div class='c' style='left:0px;width:119px'><i style='transform:scaleX(0.925);transform-origin:left'>ELANTRA OR SIMILAR</i></div><div style='left:119px;top:0;width:1px;height:14px;background:#d4d0c8'></div><div class='c r' style='left:120px;width:24px'>5</div><div style='left:144px;top:0;width:1px;height:14px;background:#d4d0c8'></div><div class='c' style='left:145px;width:199px'><i style='transform:scaleX(0.976);transform-origin:left'>Car(Intermediate) - Inclusive GPS</i></div><div style='left:344px;top:0;width:1px;height:14px;background:#d4d0c8'></div><div class='c' style='left:345px;width:74px'>Flexible Car<b class=e>...</b></div><div style='left:419px;top:0;width:1px;height:14px;background:#d4d0c8'></div><div class='c' style='left:420px;width:34px'>Wed</div><div style='left:454px;top:0;width:1px;height:14px;background:#d4d0c8'></div><div class='c n' style='left:455px;width:69px'>10/05/2017</div><div style='left:524px;top:0;width:1px;height:14px;background:#d4d0c8'></div><div class='c n' style='left:525px;width:39px'>12:00</div><div style='left:564px;top:0;width:1px;height:14px;background:#d4d0c8'></div><div class='c' style='left:565px;width:34px'>Wed</div><div style='left:599px;top:0;width:1px;height:14px;background:#d4d0c8'></div><div class='c n' style='left:600px;width:69px'>31/05/2017</div><div style='left:669px;top:0;width:1px;height:14px;background:#d4d0c8'></div><div class='c n' style='left:670px;width:39px'>12:00</div><div style='left:709px;top:0;width:1px;height:14px;background:#d4d0c8'></div><div class='c r' style='left:710px;width:24px'>21</div><div style='left:734px;top:0;width:1px;height:14px;background:#d4d0c8'></div><div class='c' style='left:735px;width:49px'>On Air<b class=e>...</b></div><div style='left:784px;top:0;width:1px;height:14px;background:#d4d0c8'></div><div class='c' style='left:785px;width:49px'>On Air<b class=e>...</b></div><div style='left:834px;top:0;width:1px;height:14px;background:#d4d0c8'></div><div class='c r n' style='left:835px;width:54px'>806.09</div><div style='left:889px;top:0;width:1px;height:14px;background:#d4d0c8'></div><div class='c r n' style='left:890px;width:64px'>806.09</div><div style='left:954px;top:0;width:1px;height:14px;background:#d4d0c8'></div><div class='c' style='left:955px;width:74px'>Alamo</div><div style='left:1029px;top:0;width:1px;height:14px;background:#d4d0c8'></div><div class='c' style='left:1030px;width:24px'>yes</div><div style='left:1054px;top:0;width:1px;height:14px;background:#d4d0c8'></div><div class='c' style='left:1055px;width:29px'>auto</div><div style='left:1084px;top:0;width:1px;height:14px;background:#d4d0c8'></div></div><div style='left:19px;top:269px;width:1352px;height:1px;background:#d4d0c8'></div><div style='left:19px;top:270px;width:1085px;height:14px;background:#b5defd;color:#000;overflow:hidden'><div class='c' style='left:0px;width:119px'><i style='transform:scaleX(0.952);transform-origin:left;margin-left:1px'>TOYOTA RAV4 OR SI<b class=e>...</b></i></div><div style='left:119px;top:0;width:1px;height:14px;background:#d4d0c8'></div><div class='c r' style='left:120px;width:24px'>5</div><div style='left:144px;top:0;width:1px;height:14px;background:#d4d0c8'></div><div class='c' style='left:145px;width:199px'>SUV(Intermediate) - Inclusive product<b class=e>...</b></div><div style='left:344px;top:0;width:1px;height:14px;background:#d4d0c8'></div><div class='c' style='left:345px;width:74px'>Flexible Car<b class=e>...</b></div><div style='left:419px;top:0;width:1px;height:14px;background:#d4d0c8'></div><div class='c' style='left:420px;width:34px'>Wed</div><div style='left:454px;top:0;width:1px;height:14px;background:#d4d0c8'></div><div class='c n' style='left:455px;width:69px'>10/05/2017</div><div style='left:524px;top:0;width:1px;height:14px;background:#d4d0c8'></div><div class='c n' style='left:525px;width:39px'>12:00</div><div style='left:564px;top:0;width:1px;height:14px;background:#d4d0c8'></div><div class='c' style='left:565px;width:34px'>Wed</div><div style='left:599px;top:0;width:1px;height:14px;background:#d4d0c8'></div><div class='c n' style='left:600px;width:69px'>31/05/2017</div><div style='left:669px;top:0;width:1px;height:14px;background:#d4d0c8'></div><div class='c n' style='left:670px;width:39px'>12:00</div><div style='left:709px;top:0;width:1px;height:14px;background:#d4d0c8'></div><div class='c r' style='left:710px;width:24px'>21</div><div style='left:734px;top:0;width:1px;height:14px;background:#d4d0c8'></div><div class='c' style='left:735px;width:49px'>On Air<b class=e>...</b></div><div style='left:784px;top:0;width:1px;height:14px;background:#d4d0c8'></div><div class='c' style='left:785px;width:49px'>On Air<b class=e>...</b></div><div style='left:834px;top:0;width:1px;height:14px;background:#d4d0c8'></div><div class='c r n' style='left:835px;width:54px'>809.71</div><div style='left:889px;top:0;width:1px;height:14px;background:#d4d0c8'></div><div class='c r n' style='left:890px;width:64px'>809.71</div><div style='left:954px;top:0;width:1px;height:14px;background:#d4d0c8'></div><div class='c' style='left:955px;width:74px'>Alamo</div><div style='left:1029px;top:0;width:1px;height:14px;background:#d4d0c8'></div><div class='c' style='left:1030px;width:24px'>yes</div><div style='left:1054px;top:0;width:1px;height:14px;background:#d4d0c8'></div><div class='c' style='left:1055px;width:29px'>auto</div><div style='left:1084px;top:0;width:1px;height:14px;background:#d4d0c8'></div></div><div style='left:19px;top:284px;width:1352px;height:1px;background:#d4d0c8'></div><div style='left:19px;top:285px;width:1085px;height:14px;background:#b5defd;color:#000;overflow:hidden'><div class='c' style='left:0px;width:119px'><i style='transform:scaleX(0.952);transform-origin:left;margin-left:1px'>TOYOTA RAV4 OR SI<b class=e>...</b></i></div><div style='left:119px;top:0;width:1px;height:14px;background:#d4d0c8'></div><div class='c r' style='left:120px;width:24px'>5</div><div style='left:144px;top:0;width:1px;height:14px;background:#d4d0c8'></div><div class='c' style='left:145px;width:199px'><i style='transform:scaleX(0.976);transform-origin:left'>SUV(Intermediate) - Gold</i></div><div style='left:344px;top:0;width:1px;height:14px;background:#d4d0c8'></div><div class='c' style='left:345px;width:74px'>Flexible Car<b class=e>...</b></div><div style='left:419px;top:0;width:1px;height:14px;background:#d4d0c8'></div><div class='c' style='left:420px;width:34px'>Wed</div><div style='left:454px;top:0;width:1px;height:14px;background:#d4d0c8'></div><div class='c n' style='left:455px;width:69px'>10/05/2017</div><div style='left:524px;top:0;width:1px;height:14px;background:#d4d0c8'></div><div class='c n' style='left:525px;width:39px'>12:00</div><div style='left:564px;top:0;width:1px;height:14px;background:#d4d0c8'></div><div class='c' style='left:565px;width:34px'>Wed</div><div style='left:599px;top:0;width:1px;height:14px;background:#d4d0c8'></div><div class='c n' style='left:600px;width:69px'>31/05/2017</div><div style='left:669px;top:0;width:1px;height:14px;background:#d4d0c8'></div><div class='c n' style='left:670px;width:39px'>12:00</div><div style='left:709px;top:0;width:1px;height:14px;background:#d4d0c8'></div><div class='c r' style='left:710px;width:24px'>21</div><div style='left:734px;top:0;width:1px;height:14px;background:#d4d0c8'></div><div class='c' style='left:735px;width:49px'>On Air<b class=e>...</b></div><div style='left:784px;top:0;width:1px;height:14px;background:#d4d0c8'></div><div class='c' style='left:785px;width:49px'>On Air<b class=e>...</b></div><div style='left:834px;top:0;width:1px;height:14px;background:#d4d0c8'></div><div class='c r n' style='left:835px;width:54px'>818.77</div><div style='left:889px;top:0;width:1px;height:14px;background:#d4d0c8'></div><div class='c r n' style='left:890px;width:64px'>818.77</div><div style='left:954px;top:0;width:1px;height:14px;background:#d4d0c8'></div><div class='c' style='left:955px;width:74px'>Alamo</div><div style='left:1029px;top:0;width:1px;height:14px;background:#d4d0c8'></div><div class='c' style='left:1030px;width:24px'>yes</div><div style='left:1054px;top:0;width:1px;height:14px;background:#d4d0c8'></div><div class='c' style='left:1055px;width:29px'>auto</div><div style='left:1084px;top:0;width:1px;height:14px;background:#d4d0c8'></div></div><div style='left:19px;top:299px;width:1352px;height:1px;background:#d4d0c8'></div><div style='left:19px;top:300px;width:1085px;height:14px;background:#b5defd;color:#000;overflow:hidden'><div class='c' style='left:0px;width:119px'><i style='transform:scaleX(0.931);transform-origin:left;margin-left:1px'>TOYOTA COROLLA O<b class=e>...</b></i></div><div style='left:119px;top:0;width:1px;height:14px;background:#d4d0c8'></div><div class='c r' style='left:120px;width:24px'>5</div><div style='left:144px;top:0;width:1px;height:14px;background:#d4d0c8'></div><div class='c' style='left:145px;width:199px'><i style='transform:scaleX(0.976);transform-origin:left'>Car(Intermediate) - Inclusive GPS</i></div><div style='left:344px;top:0;width:1px;height:14px;background:#d4d0c8'></div><div class='c' style='left:345px;width:74px'>Flexible Car<b class=e>...</b></div><div style='left:419px;top:0;width:1px;height:14px;background:#d4d0c8'></div><div class='c' style='left:420px;width:34px'>Wed</div><div style='left:454px;top:0;width:1px;height:14px;background:#d4d0c8'></div><div class='c n' style='left:455px;width:69px'>10/05/2017</div><div style='left:524px;top:0;width:1px;height:14px;background:#d4d0c8'></div><div class='c n' style='left:525px;width:39px'>12:00</div><div style='left:564px;top:0;width:1px;height:14px;background:#d4d0c8'></div><div class='c' style='left:565px;width:34px'>Wed</div><div style='left:599px;top:0;width:1px;height:14px;background:#d4d0c8'></div><div class='c n' style='left:600px;width:69px'>31/05/2017</div><div style='left:669px;top:0;width:1px;height:14px;background:#d4d0c8'></div><div class='c n' style='left:670px;width:39px'>12:00</div><div style='left:709px;top:0;width:1px;height:14px;background:#d4d0c8'></div><div class='c r' style='left:710px;width:24px'>21</div><div style='left:734px;top:0;width:1px;height:14px;background:#d4d0c8'></div><div class='c' style='left:735px;width:49px'>On Air<b class=e>...</b></div><div style='left:784px;top:0;width:1px;height:14px;background:#d4d0c8'></div><div class='c' style='left:785px;width:49px'>On Air<b class=e>...</b></div><div style='left:834px;top:0;width:1px;height:14px;background:#d4d0c8'></div><div class='c r n' style='left:835px;width:54px'>819.91</div><div style='left:889px;top:0;width:1px;height:14px;background:#d4d0c8'></div><div class='c r n' style='left:890px;width:64px'>819.91</div><div style='left:954px;top:0;width:1px;height:14px;background:#d4d0c8'></div><div class='c' style='left:955px;width:74px'>Alamo</div><div style='left:1029px;top:0;width:1px;height:14px;background:#d4d0c8'></div><div class='c' style='left:1030px;width:24px'>yes</div><div style='left:1054px;top:0;width:1px;height:14px;background:#d4d0c8'></div><div class='c' style='left:1055px;width:29px'>auto</div><div style='left:1084px;top:0;width:1px;height:14px;background:#d4d0c8'></div></div><div style='left:19px;top:314px;width:1352px;height:1px;background:#d4d0c8'></div><div style='left:19px;top:315px;width:1085px;height:14px;background:#b5defd;color:#000;overflow:hidden'><div class='c' style='left:0px;width:119px'><i style='transform:scaleX(0.925);transform-origin:left'>ELANTRA OR SIMILAR</i></div><div style='left:119px;top:0;width:1px;height:14px;background:#d4d0c8'></div><div class='c r' style='left:120px;width:24px'>5</div><div style='left:144px;top:0;width:1px;height:14px;background:#d4d0c8'></div><div class='c' style='left:145px;width:199px'><i style='transform:scaleX(0.965);transform-origin:left'>Car(Intermediate) - Gold GPS</i></div><div style='left:344px;top:0;width:1px;height:14px;background:#d4d0c8'></div><div class='c' style='left:345px;width:74px'>Flexible Car<b class=e>...</b></div><div style='left:419px;top:0;width:1px;height:14px;background:#d4d0c8'></div><div class='c' style='left:420px;width:34px'>Wed</div><div style='left:454px;top:0;width:1px;height:14px;background:#d4d0c8'></div><div class='c n' style='left:455px;width:69px'>10/05/2017</div><div style='left:524px;top:0;width:1px;height:14px;background:#d4d0c8'></div><div class='c n' style='left:525px;width:39px'>12:00</div><div style='left:564px;top:0;width:1px;height:14px;background:#d4d0c8'></div><div class='c' style='left:565px;width:34px'>Wed</div><div style='left:599px;top:0;width:1px;height:14px;background:#d4d0c8'></div><div class='c n' style='left:600px;width:69px'>31/05/2017</div><div style='left:669px;top:0;width:1px;height:14px;background:#d4d0c8'></div><div class='c n' style='left:670px;width:39px'>12:00</div><div style='left:709px;top:0;width:1px;height:14px;background:#d4d0c8'></div><div class='c r' style='left:710px;width:24px'>21</div><div style='left:734px;top:0;width:1px;height:14px;background:#d4d0c8'></div><div class='c' style='left:735px;width:49px'>On Air<b class=e>...</b></div><div style='left:784px;top:0;width:1px;height:14px;background:#d4d0c8'></div><div class='c' style='left:785px;width:49px'>On Air<b class=e>...</b></div><div style='left:834px;top:0;width:1px;height:14px;background:#d4d0c8'></div><div class='c r n' style='left:835px;width:54px'>847.59</div><div style='left:889px;top:0;width:1px;height:14px;background:#d4d0c8'></div><div class='c r n' style='left:890px;width:64px'>847.59</div><div style='left:954px;top:0;width:1px;height:14px;background:#d4d0c8'></div><div class='c' style='left:955px;width:74px'>Alamo</div><div style='left:1029px;top:0;width:1px;height:14px;background:#d4d0c8'></div><div class='c' style='left:1030px;width:24px'>yes</div><div style='left:1054px;top:0;width:1px;height:14px;background:#d4d0c8'></div><div class='c' style='left:1055px;width:29px'>auto</div><div style='left:1084px;top:0;width:1px;height:14px;background:#d4d0c8'></div></div><div style='left:19px;top:329px;width:1352px;height:1px;background:#d4d0c8'></div><div style='left:19px;top:330px;width:1085px;height:14px;background:#b5defd;color:#000;overflow:hidden'><div class='c' style='left:0px;width:119px'><i style='transform:scaleX(0.925);transform-origin:left'>ELANTRA OR SIMILAR</i></div><div style='left:119px;top:0;width:1px;height:14px;background:#d4d0c8'></div><div class='c r' style='left:120px;width:24px'>5</div><div style='left:144px;top:0;width:1px;height:14px;background:#d4d0c8'></div><div class='c' style='left:145px;width:199px'><i style='transform:scaleX(0.979);transform-origin:left'>Car(Intermediate) - Inclusive GPS - Pl<b class=e>...</b></i></div><div style='left:344px;top:0;width:1px;height:14px;background:#d4d0c8'></div><div class='c' style='left:345px;width:74px'>Flexible Car<b class=e>...</b></div><div style='left:419px;top:0;width:1px;height:14px;background:#d4d0c8'></div><div class='c' style='left:420px;width:34px'>Wed</div><div style='left:454px;top:0;width:1px;height:14px;background:#d4d0c8'></div><div class='c n' style='left:455px;width:69px'>10/05/2017</div><div style='left:524px;top:0;width:1px;height:14px;background:#d4d0c8'></div><div class='c n' style='left:525px;width:39px'>12:00</div><div style='left:564px;top:0;width:1px;height:14px;background:#d4d0c8'></div><div class='c' style='left:565px;width:34px'>Wed</div><div style='left:599px;top:0;width:1px;height:14px;background:#d4d0c8'></div><div class='c n' style='left:600px;width:69px'>31/05/2017</div><div style='left:669px;top:0;width:1px;height:14px;background:#d4d0c8'></div><div class='c n' style='left:670px;width:39px'>12:00</div><div style='left:709px;top:0;width:1px;height:14px;background:#d4d0c8'></div><div class='c r' style='left:710px;width:24px'>21</div><div style='left:734px;top:0;width:1px;height:14px;background:#d4d0c8'></div><div class='c' style='left:735px;width:49px'>On Air<b class=e>...</b></div><div style='left:784px;top:0;width:1px;height:14px;background:#d4d0c8'></div><div class='c' style='left:785px;width:49px'>On Air<b class=e>...</b></div><div style='left:834px;top:0;width:1px;height:14px;background:#d4d0c8'></div><div class='c r n' style='left:835px;width:54px'>848.55</div><div style='left:889px;top:0;width:1px;height:14px;background:#d4d0c8'></div><div class='c r n' style='left:890px;width:64px'>848.55</div><div style='left:954px;top:0;width:1px;height:14px;background:#d4d0c8'></div><div class='c' style='left:955px;width:74px'><i style='transform:scaleX(0.976);transform-origin:left'>National</i></div><div style='left:1029px;top:0;width:1px;height:14px;background:#d4d0c8'></div><div class='c' style='left:1030px;width:24px'>yes</div><div style='left:1054px;top:0;width:1px;height:14px;background:#d4d0c8'></div><div class='c' style='left:1055px;width:29px'>auto</div><div style='left:1084px;top:0;width:1px;height:14px;background:#d4d0c8'></div></div><div style='left:19px;top:344px;width:1352px;height:1px;background:#d4d0c8'></div><div style='left:19px;top:345px;width:1085px;height:14px;background:#b5defd;color:#000;overflow:hidden'><div class='c' style='left:0px;width:119px'><i style='transform:scaleX(0.931);transform-origin:left;margin-left:1px'>TOYOTA COROLLA O<b class=e>...</b></i></div><div style='left:119px;top:0;width:1px;height:14px;background:#d4d0c8'></div><div class='c r' style='left:120px;width:24px'>5</div><div style='left:144px;top:0;width:1px;height:14px;background:#d4d0c8'></div><div class='c' style='left:145px;width:199px'><i style='transform:scaleX(0.965);transform-origin:left'>Car(Intermediate) - Gold GPS</i></div><div style='left:344px;top:0;width:1px;height:14px;background:#d4d0c8'></div><div class='c' style='left:345px;width:74px'>Flexible Car<b class=e>...</b></div><div style='left:419px;top:0;width:1px;height:14px;background:#d4d0c8'></div><div class='c' style='left:420px;width:34px'>Wed</div><div style='left:454px;top:0;width:1px;height:14px;background:#d4d0c8'></div><div class='c n' style='left:455px;width:69px'>10/05/2017</div><div style='left:524px;top:0;width:1px;height:14px;background:#d4d0c8'></div><div class='c n' style='left:525px;width:39px'>12:00</div><div style='left:564px;top:0;width:1px;height:14px;background:#d4d0c8'></div><div class='c' style='left:565px;width:34px'>Wed</div><div style='left:599px;top:0;width:1px;height:14px;background:#d4d0c8'></div><div class='c n' style='left:600px;width:69px'>31/05/2017</div><div style='left:669px;top:0;width:1px;height:14px;background:#d4d0c8'></div><div class='c n' style='left:670px;width:39px'>12:00</div><div style='left:709px;top:0;width:1px;height:14px;background:#d4d0c8'></div><div class='c r' style='left:710px;width:24px'>21</div><div style='left:734px;top:0;width:1px;height:14px;background:#d4d0c8'></div><div class='c' style='left:735px;width:49px'>On Air<b class=e>...</b></div><div style='left:784px;top:0;width:1px;height:14px;background:#d4d0c8'></div><div class='c' style='left:785px;width:49px'>On Air<b class=e>...</b></div><div style='left:834px;top:0;width:1px;height:14px;background:#d4d0c8'></div><div class='c r n' style='left:835px;width:54px'>858.65</div><div style='left:889px;top:0;width:1px;height:14px;background:#d4d0c8'></div><div class='c r n' style='left:890px;width:64px'>858.65</div><div style='left:954px;top:0;width:1px;height:14px;background:#d4d0c8'></div><div class='c' style='left:955px;width:74px'>Alamo</div><div style='left:1029px;top:0;width:1px;height:14px;background:#d4d0c8'></div><div class='c' style='left:1030px;width:24px'>yes</div><div style='left:1054px;top:0;width:1px;height:14px;background:#d4d0c8'></div><div class='c' style='left:1055px;width:29px'>auto</div><div style='left:1084px;top:0;width:1px;height:14px;background:#d4d0c8'></div></div><div style='left:19px;top:359px;width:1352px;height:1px;background:#d4d0c8'></div><div style='left:19px;top:360px;width:1085px;height:14px;background:#b5defd;color:#000;overflow:hidden'><div class='c' style='left:0px;width:119px'><i style='transform:scaleX(0.925);transform-origin:left'>ELANTRA OR SIMILAR</i></div><div style='left:119px;top:0;width:1px;height:14px;background:#d4d0c8'></div><div class='c r' style='left:120px;width:24px'>5</div><div style='left:144px;top:0;width:1px;height:14px;background:#d4d0c8'></div><div class='c' style='left:145px;width:199px'><i style='transform:scaleX(0.979);transform-origin:left'>Car(Intermediate) - Inclusive GPS - Pl<b class=e>...</b></i></div><div style='left:344px;top:0;width:1px;height:14px;background:#d4d0c8'></div><div class='c' style='left:345px;width:74px'>Flexible Car<b class=e>...</b></div><div style='left:419px;top:0;width:1px;height:14px;background:#d4d0c8'></div><div class='c' style='left:420px;width:34px'>Wed</div><div style='left:454px;top:0;width:1px;height:14px;background:#d4d0c8'></div><div class='c n' style='left:455px;width:69px'>10/05/2017</div><div style='left:524px;top:0;width:1px;height:14px;background:#d4d0c8'></div><div class='c n' style='left:525px;width:39px'>12:00</div><div style='left:564px;top:0;width:1px;height:14px;background:#d4d0c8'></div><div class='c' style='left:565px;width:34px'>Wed</div><div style='left:599px;top:0;width:1px;height:14px;background:#d4d0c8'></div><div class='c n' style='left:600px;width:69px'>31/05/2017</div><div style='left:669px;top:0;width:1px;height:14px;background:#d4d0c8'></div><div class='c n' style='left:670px;width:39px'>12:00</div><div style='left:709px;top:0;width:1px;height:14px;background:#d4d0c8'></div><div class='c r' style='left:710px;width:24px'>21</div><div style='left:734px;top:0;width:1px;height:14px;background:#d4d0c8'></div><div class='c' style='left:735px;width:49px'>On Air<b class=e>...</b></div><div style='left:784px;top:0;width:1px;height:14px;background:#d4d0c8'></div><div class='c' style='left:785px;width:49px'>On Air<b class=e>...</b></div><div style='left:834px;top:0;width:1px;height:14px;background:#d4d0c8'></div><div class='c r n' style='left:835px;width:54px'>860.69</div><div style='left:889px;top:0;width:1px;height:14px;background:#d4d0c8'></div><div class='c r n' style='left:890px;width:64px'>860.69</div><div style='left:954px;top:0;width:1px;height:14px;background:#d4d0c8'></div><div class='c' style='left:955px;width:74px'>Alamo</div><div style='left:1029px;top:0;width:1px;height:14px;background:#d4d0c8'></div><div class='c' style='left:1030px;width:24px'>yes</div><div style='left:1054px;top:0;width:1px;height:14px;background:#d4d0c8'></div><div class='c' style='left:1055px;width:29px'>auto</div><div style='left:1084px;top:0;width:1px;height:14px;background:#d4d0c8'></div></div><div style='left:19px;top:374px;width:1352px;height:1px;background:#d4d0c8'></div><div style='left:19px;top:375px;width:1085px;height:14px;background:#b5defd;color:#000;overflow:hidden'><div class='c' style='left:0px;width:119px'><i style='transform:scaleX(0.952);transform-origin:left;margin-left:1px'>TOYOTA RAV4 OR SI<b class=e>...</b></i></div><div style='left:119px;top:0;width:1px;height:14px;background:#d4d0c8'></div><div class='c r' style='left:120px;width:24px'>5</div><div style='left:144px;top:0;width:1px;height:14px;background:#d4d0c8'></div><div class='c' style='left:145px;width:199px'><i style='transform:scaleX(0.975);transform-origin:left'>SUV(Intermediate) - Gold - Plus Exces<b class=e>...</b></i></div><div style='left:344px;top:0;width:1px;height:14px;background:#d4d0c8'></div><div class='c' style='left:345px;width:74px'>Flexible Car<b class=e>...</b></div><div style='left:419px;top:0;width:1px;height:14px;background:#d4d0c8'></div><div class='c' style='left:420px;width:34px'>Wed</div><div style='left:454px;top:0;width:1px;height:14px;background:#d4d0c8'></div><div class='c n' style='left:455px;width:69px'>10/05/2017</div><div style='left:524px;top:0;width:1px;height:14px;background:#d4d0c8'></div><div class='c n' style='left:525px;width:39px'>12:00</div><div style='left:564px;top:0;width:1px;height:14px;background:#d4d0c8'></div><div class='c' style='left:565px;width:34px'>Wed</div><div style='left:599px;top:0;width:1px;height:14px;background:#d4d0c8'></div><div class='c n' style='left:600px;width:69px'>31/05/2017</div><div style='left:669px;top:0;width:1px;height:14px;background:#d4d0c8'></div><div class='c n' style='left:670px;width:39px'>12:00</div><div style='left:709px;top:0;width:1px;height:14px;background:#d4d0c8'></div><div class='c r' style='left:710px;width:24px'>21</div><div style='left:734px;top:0;width:1px;height:14px;background:#d4d0c8'></div><div class='c' style='left:735px;width:49px'>On Air<b class=e>...</b></div><div style='left:784px;top:0;width:1px;height:14px;background:#d4d0c8'></div><div class='c' style='left:785px;width:49px'>On Air<b class=e>...</b></div><div style='left:834px;top:0;width:1px;height:14px;background:#d4d0c8'></div><div class='c r n' style='left:835px;width:54px'>873.37</div><div style='left:889px;top:0;width:1px;height:14px;background:#d4d0c8'></div><div class='c r n' style='left:890px;width:64px'>873.37</div><div style='left:954px;top:0;width:1px;height:14px;background:#d4d0c8'></div><div class='c' style='left:955px;width:74px'>Alamo</div><div style='left:1029px;top:0;width:1px;height:14px;background:#d4d0c8'></div><div class='c' style='left:1030px;width:24px'>yes</div><div style='left:1054px;top:0;width:1px;height:14px;background:#d4d0c8'></div><div class='c' style='left:1055px;width:29px'>auto</div><div style='left:1084px;top:0;width:1px;height:14px;background:#d4d0c8'></div></div><div style='left:19px;top:389px;width:1352px;height:1px;background:#d4d0c8'></div><div style='left:19px;top:390px;width:1085px;height:14px;background:#b5defd;color:#000;overflow:hidden'><div class='c' style='left:0px;width:119px'><i style='transform:scaleX(0.931);transform-origin:left;margin-left:1px'>TOYOTA COROLLA O<b class=e>...</b></i></div><div style='left:119px;top:0;width:1px;height:14px;background:#d4d0c8'></div><div class='c r' style='left:120px;width:24px'>5</div><div style='left:144px;top:0;width:1px;height:14px;background:#d4d0c8'></div><div class='c' style='left:145px;width:199px'><i style='transform:scaleX(0.979);transform-origin:left'>Car(Intermediate) - Inclusive GPS - Pl<b class=e>...</b></i></div><div style='left:344px;top:0;width:1px;height:14px;background:#d4d0c8'></div><div class='c' style='left:345px;width:74px'>Flexible Car<b class=e>...</b></div><div style='left:419px;top:0;width:1px;height:14px;background:#d4d0c8'></div><div class='c' style='left:420px;width:34px'>Wed</div><div style='left:454px;top:0;width:1px;height:14px;background:#d4d0c8'></div><div class='c n' style='left:455px;width:69px'>10/05/2017</div><div style='left:524px;top:0;width:1px;height:14px;background:#d4d0c8'></div><div class='c n' style='left:525px;width:39px'>12:00</div><div style='left:564px;top:0;width:1px;height:14px;background:#d4d0c8'></div><div class='c' style='left:565px;width:34px'>Wed</div><div style='left:599px;top:0;width:1px;height:14px;background:#d4d0c8'></div><div class='c n' style='left:600px;width:69px'>31/05/2017</div><div style='left:669px;top:0;width:1px;height:14px;background:#d4d0c8'></div><div class='c n' style='left:670px;width:39px'>12:00</div><div style='left:709px;top:0;width:1px;height:14px;background:#d4d0c8'></div><div class='c r' style='left:710px;width:24px'>21</div><div style='left:734px;top:0;width:1px;height:14px;background:#d4d0c8'></div><div class='c' style='left:735px;width:49px'>On Air<b class=e>...</b></div><div style='left:784px;top:0;width:1px;height:14px;background:#d4d0c8'></div><div class='c' style='left:785px;width:49px'>On Air<b class=e>...</b></div><div style='left:834px;top:0;width:1px;height:14px;background:#d4d0c8'></div><div class='c r n' style='left:835px;width:54px'>874.51</div><div style='left:889px;top:0;width:1px;height:14px;background:#d4d0c8'></div><div class='c r n' style='left:890px;width:64px'>874.51</div><div style='left:954px;top:0;width:1px;height:14px;background:#d4d0c8'></div><div class='c' style='left:955px;width:74px'>Alamo</div><div style='left:1029px;top:0;width:1px;height:14px;background:#d4d0c8'></div><div class='c' style='left:1030px;width:24px'>yes</div><div style='left:1054px;top:0;width:1px;height:14px;background:#d4d0c8'></div><div class='c' style='left:1055px;width:29px'>auto</div><div style='left:1084px;top:0;width:1px;height:14px;background:#d4d0c8'></div></div><div style='left:19px;top:404px;width:1352px;height:1px;background:#d4d0c8'></div><div style='left:19px;top:405px;width:1085px;height:4px;background:#b5defd;color:#000;overflow:hidden'><div class='c' style='left:0px;width:119px'><i style='transform:scaleX(0.925);transform-origin:left'>ELANTRA OR SIMILAR</i></div><div style='left:119px;top:0;width:1px;height:4px;background:#d4d0c8'></div><div class='c r' style='left:120px;width:24px'>5</div><div style='left:144px;top:0;width:1px;height:4px;background:#d4d0c8'></div><div class='c' style='left:145px;width:199px'><i style='transform:scaleX(0.965);transform-origin:left'>Car(Intermediate) - Gold GPS</i></div><div style='left:344px;top:0;width:1px;height:4px;background:#d4d0c8'></div><div class='c' style='left:345px;width:74px'>Flexible Car<b class=e>...</b></div><div style='left:419px;top:0;width:1px;height:4px;background:#d4d0c8'></div><div class='c' style='left:420px;width:34px'>Wed</div><div style='left:454px;top:0;width:1px;height:4px;background:#d4d0c8'></div><div class='c n' style='left:455px;width:69px'>10/05/2017</div><div style='left:524px;top:0;width:1px;height:4px;background:#d4d0c8'></div><div class='c n' style='left:525px;width:39px'>12:00</div><div style='left:564px;top:0;width:1px;height:4px;background:#d4d0c8'></div><div class='c' style='left:565px;width:34px'>Wed</div><div style='left:599px;top:0;width:1px;height:4px;background:#d4d0c8'></div><div class='c n' style='left:600px;width:69px'>31/05/2017</div><div style='left:669px;top:0;width:1px;height:4px;background:#d4d0c8'></div><div class='c n' style='left:670px;width:39px'>12:00</div><div style='left:709px;top:0;width:1px;height:4px;background:#d4d0c8'></div><div class='c r' style='left:710px;width:24px'>21</div><div style='left:734px;top:0;width:1px;height:4px;background:#d4d0c8'></div><div class='c' style='left:735px;width:49px'>On Air<b class=e>...</b></div><div style='left:784px;top:0;width:1px;height:4px;background:#d4d0c8'></div><div class='c' style='left:785px;width:49px'>On Air<b class=e>...</b></div><div style='left:834px;top:0;width:1px;height:4px;background:#d4d0c8'></div><div class='c r n' style='left:835px;width:54px'>877.67</div><div style='left:889px;top:0;width:1px;height:4px;background:#d4d0c8'></div><div class='c r n' style='left:890px;width:64px'>877.67</div><div style='left:954px;top:0;width:1px;height:4px;background:#d4d0c8'></div><div class='c' style='left:955px;width:74px'><i style='transform:scaleX(0.976);transform-origin:left'>National</i></div><div style='left:1029px;top:0;width:1px;height:4px;background:#d4d0c8'></div><div class='c' style='left:1030px;width:24px'>yes</div><div style='left:1054px;top:0;width:1px;height:4px;background:#d4d0c8'></div><div class='c' style='left:1055px;width:29px'>auto</div><div style='left:1084px;top:0;width:1px;height:4px;background:#d4d0c8'></div></div><div style='left:1372px;top:26px;width:16px;height:384px;background:repeating-conic-gradient(#fff 0 25%, #d4d0c8 0 50%) 0 0/2px 2px'></div><div style='left:1372px;top:26px;width:16px;height:16px;background:#d4d0c8;border-top:1px solid #d4d0c8;border-left:1px solid #d4d0c8;border-right:1px solid #404040;border-bottom:1px solid #404040;box-shadow:inset 1px 1px 0 #fff, inset -1px -1px 0 #808080'></div><div style='left:1376px;top:32px;width:7px;height:4px'><svg width='7' height='4' viewBox='0 0 7 4'><path d='M3.5 0L7 4H0Z' fill='#000'/></svg></div><div style='left:1372px;top:42px;width:16px;height:180px;background:#d4d0c8;border-top:1px solid #d4d0c8;border-left:1px solid #d4d0c8;border-right:1px solid #404040;border-bottom:1px solid #404040;box-shadow:inset 1px 1px 0 #fff, inset -1px -1px 0 #808080'></div><div style='left:1372px;top:394px;width:16px;height:16px;background:#d4d0c8;border-top:1px solid #d4d0c8;border-left:1px solid #d4d0c8;border-right:1px solid #404040;border-bottom:1px solid #404040;box-shadow:inset 1px 1px 0 #fff, inset -1px -1px 0 #808080'></div><div style='left:1376px;top:400px;width:7px;height:4px'><svg width='7' height='4' viewBox='0 0 7 4'><path d='M0 0H7L3.5 4Z' fill='#000'/></svg></div><div style='left:1388px;top:25px;width:1px;height:386px;background:#d4d0c8'></div><div style='left:17px;top:410px;width:1372px;height:1px;background:#d4d0c8'></div><div style='left:1389px;top:24px;width:1px;height:388px;background:#fff'></div><div style='left:16px;top:411px;width:1374px;height:1px;background:#fff'></div><div style='left:21px;top:436px;line-height:14px;white-space:pre;letter-spacing:.06px'>First portion: 10.3 sec, total search time: 13.7 sec</div><div style='left:1359px;top:432px;width:23px;height:22px;background:#d4d0c8;border-top:1px solid #fff;border-left:1px solid #fff;border-right:1px solid #404040;border-bottom:1px solid #404040;box-shadow:inset -1px -1px 0 #808080'></div><div style='left:1366px;top:436px;width:8px;height:13px'><svg width='8' height='13' viewBox='0 0 8 13'><rect x='3' y='1' width='2' height='2' fill='#0a56a8'/><path d='M2 4H5V11H6V12H2V11H3V5H2Z' fill='#0a56a8'/></svg></div><div style='left:14px;top:459px;width:1378px;height:1px;background:#808080'></div><div style='left:14px;top:460px;width:52px;height:17px;background:#d4d0c8;color:#000;padding-left:3px;line-height:17px;white-space:pre'><i style='transform:scaleX(0.956);transform-origin:left'>Summary</i></div><div style='left:66px;top:460px;width:1px;height:17px;background:#808080'></div><div style='left:67px;top:460px;width:40px;height:17px;background:#d4d0c8;color:#000;padding-left:2px;line-height:17px;white-space:pre'>Search</div><div style='left:107px;top:460px;width:1px;height:17px;background:#808080'></div><div style='left:108px;top:460px;width:108px;height:17px;background:#ccffcc;color:#000;padding-left:3px;line-height:17px;white-space:pre'><i style='transform:scaleX(0.970);transform-origin:left'>Acc 2A,1C MCO; 14n</i></div><div style='left:216px;top:460px;width:1px;height:17px;background:#808080'></div><div style='left:217px;top:460px;width:75px;height:17px;background:#bbbbff;color:#000;padding-left:2px;line-height:17px;white-space:pre'><i style='transform:scaleX(0.987);transform-origin:left'>Car MCO; 15d</i></div><div style='left:292px;top:460px;width:1px;height:17px;background:#808080'></div><div style='left:293px;top:460px;width:108px;height:17px;background:#ccffcc;color:#000;padding-left:3px;line-height:17px;white-space:pre'><i style='transform:scaleX(0.970);transform-origin:left'>Acc 2A,1C MCO; 21n</i></div><div style='left:401px;top:460px;width:1px;height:17px;background:#808080'></div><div style='left:402px;top:459px;width:74px;height:18px;background:#000080;color:#fff;border-radius:2px;padding-left:2px;line-height:19px;white-space:pre'><i style='transform:scaleX(0.987);transform-origin:left'>Car MCO; 22d</i></div><div style='left:476px;top:460px;width:96px;height:17px;background:#d4d0c8;color:#000;padding-left:4px;line-height:17px;white-space:pre'><i style='transform:scaleX(0.945);transform-origin:left'>Financial Summary</i></div><div style='left:572px;top:460px;width:1px;height:17px;background:#808080'></div><div style='left:579px;top:485px;line-height:14px;white-space:pre'><i style='transform:scaleX(0.960);transform-origin:left'>User: 485 - Jemma Swann</i></div><div style='left:714px;top:485px;line-height:14px;white-space:pre'><i style='transform:scaleX(0.984);transform-origin:left'>Retailer: &#x27;Ocean-Florida&#x27;</i></div><div style='left:841px;top:485px;line-height:14px;white-space:pre'><i style='transform:scaleX(0.988);transform-origin:left'>Client: none</i></div><div style='left:1339px;top:485px;line-height:14px;white-space:pre'><i style='transform:scaleX(0.927);transform-origin:left'>14:28 GMT</i></div><div style='left:0;top:512px;width:1398px;height:1px;background:#808080'></div><div style='left:0;top:513px;width:1398px;height:1px;background:#404040'></div><div style='left:0;top:514px;width:1398px;height:1px;background:#e8e6e2'></div><div style='left:0;top:514px;width:22px;height:38px;background:#fff;border-right:1px solid #fff;border-bottom:1px solid #fff'></div><div style='left:20px;top:515px;width:1px;height:36px;background:#d4d0c8'></div><div style='left:0;top:550px;width:21px;height:1px;background:#d4d0c8'></div><div style='left:0;top:514px;width:21px;height:1px;background:#404040'></div><div style='left:-1px;top:526px;line-height:14px;font-weight:bold;white-space:pre'>a...</div><div style='left:1207px;top:515px;width:191px;height:37px;border-left:1px solid #808080;border-bottom:1px solid #fff;border-right:1px solid #fff'></div><div style='left:1331px;top:518px;line-height:14px;white-space:pre'>14:28</div><div style='left:1316px;top:534px;line-height:14px;white-space:pre'>18/10/2016</div><div style='left:1213px;top:524px;width:18px;height:18px'><svg width='18' height='18' viewBox='0 0 18 18'>
<defs><linearGradient id='ao' x1='0' y1='0' x2='0' y2='1'><stop offset='0' stop-color='#ffc030'/><stop offset='1' stop-color='#e8501c'/></linearGradient>
<linearGradient id='ab' x1='0' y1='0' x2='1' y2='1'><stop offset='0' stop-color='#1060b0'/><stop offset='1' stop-color='#30b0e8'/></linearGradient>
<linearGradient id='ag' x1='0' y1='0' x2='1' y2='1'><stop offset='0' stop-color='#70c040'/><stop offset='1' stop-color='#208a50'/></linearGradient>
<linearGradient id='ar' x1='0' y1='0' x2='1' y2='0'><stop offset='0' stop-color='#d01818'/><stop offset='1' stop-color='#f07010'/></linearGradient></defs>
<path d='M2 1 L8 1 L8.5 8.5 L2 8.5Z' fill='url(#ao)'/>
<path d='M8 2 L17 2 L17 8 L10 9 L8.5 8.5Z' fill='url(#ab)'/>
<path d='M1 8.5 L8.5 8.5 L10 9 L10.5 16 L1 16Z' fill='url(#ag)'/>
<path d='M10 9 L16 8 L16 17 L10.5 17Z' fill='url(#ar)'/></svg></div><div style='left:1238px;top:528px;width:17px;height:11px'><svg width='17' height='11' viewBox='0 0 17 11' shape-rendering='crispEdges'>
<defs><linearGradient id='ng' x1='0' y1='0' x2='1' y2='1'><stop offset='0' stop-color='#b8f8a0'/><stop offset='1' stop-color='#40c020'/></linearGradient></defs>
<rect x='0.5' y='1.5' width='13' height='7' fill='url(#ng)' stroke='#108010'/>
<rect x='4' y='8' width='7' height='2' fill='#f0e000'/>
<rect x='10' y='2' width='2' height='2' fill='#000'/>
<rect x='13' y='0' width='3' height='1' fill='#000'/><rect x='13' y='0' width='1' height='10' fill='#000'/><rect x='14' y='3' width='1' height='1' fill='#000'/><rect x='14' y='5' width='1' height='1' fill='#000'/></svg></div><div style='left:1262px;top:525px;width:17px;height:17px'><svg width='17' height='17' viewBox='0 0 17 17' shape-rendering='crispEdges'>
<rect x='5.5' y='2.5' width='10' height='10' fill='#fff' stroke='#6a6a6a'/>
<rect x='7' y='4' width='7' height='7' fill='#b8b8b8'/>
<rect x='5.5' y='12.5' width='9' height='2' fill='#fff' stroke='#6a6a6a'/>
<rect x='0.5' y='0.5' width='6' height='7' fill='#fff' stroke='#555'/>
<rect x='3' y='1' width='1' height='4' fill='#555'/>
<rect x='2' y='8' width='1' height='8' fill='#333'/><rect x='3' y='8' width='1' height='8' fill='#fff'/></svg></div><div style='left:1285px;top:525px;width:18px;height:17px'><svg width='18' height='17' viewBox='0 0 18 17'>
<path d='M1.5 4.5H3.5L8.5 1V15.5L3.5 11.5H1.5Z' fill='#fff' stroke='#808080'/>
<circle cx='12' cy='11' r='5' fill='#e81c10'/>
<path d='M9.8 8.8L14.2 13.2M14.2 8.8L9.8 13.2' stroke='#fff' stroke-width='1.5'/></svg></div><div style='left:1379px;top:527px;width:16px;height:13px'><svg width='16' height='13' viewBox='0 0 16 13' shape-rendering='crispEdges'>
<defs><linearGradient id='dg' x1='0' y1='0' x2='1' y2='1'><stop offset='0' stop-color='#0c3ca8'/><stop offset='1' stop-color='#6aaaf0'/></linearGradient></defs>
<rect x='0' y='0' width='16' height='13' fill='#c0d4ec'/><rect x='1' y='1' width='14' height='11' fill='url(#dg)'/><rect x='1' y='9' width='14' height='3' fill='#2a2a24'/><rect x='2' y='8' width='3' height='3' fill='#3a90e0'/><rect x='3' y='9' width='1' height='1' fill='#f04020'/><rect x='4' y='9' width='1' height='1' fill='#40c040'/><rect x='3' y='10' width='2' height='1' fill='#f0c020'/></svg></div></body></html>
